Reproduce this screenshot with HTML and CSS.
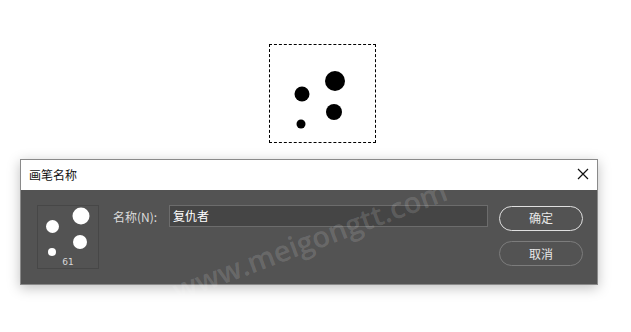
FILE: index.html
```html
<!DOCTYPE html>
<html lang="zh">
<head>
<meta charset="utf-8">
<link rel="stylesheet" href="styles.css">
</head>
<body>
<div class="page">
  <div class="stage">
    <div class="brush-preview">
      <svg width="105" height="97" viewBox="0 0 105 97">
        <circle cx="65" cy="36" r="10" fill="#000"/>
        <circle cx="32" cy="49" r="7.5" fill="#000"/>
        <circle cx="64" cy="67" r="8" fill="#000"/>
        <circle cx="31" cy="79" r="4.5" fill="#000"/>
      </svg>
    </div>
  </div>
  <div class="dialog">
    <div class="titlebar">
      <span class="title">画笔名称</span>
      <svg class="close" width="12" height="12" viewBox="0 0 12 12">
        <path d="M1 1 L11 11 M11 1 L1 11" stroke="#111" stroke-width="1.2" fill="none"/>
      </svg>
    </div>
    <div class="body">
      <div class="thumb">
        <svg width="62" height="64" viewBox="0 0 62 64">
          <circle cx="44" cy="11" r="8.5" fill="#fff"/>
          <circle cx="15.5" cy="21.5" r="6.5" fill="#fff"/>
          <circle cx="43" cy="37" r="7" fill="#fff"/>
          <circle cx="15" cy="47" r="4" fill="#fff"/>
        </svg>
        <span class="thumb-num">61</span>
      </div>
      <div class="field">
        <span class="label">名称(N):</span>
        <div class="input">复仇者</div>
      </div>
      <div class="buttons">
        <div class="btn primary">确定</div>
        <div class="btn">取消</div>
      </div>
    </div>
  </div>
  <div class="watermark">www.meigongtt.com</div>
</div>
</body>
</html>
```

FILE: styles.css
```css
html, body {
  margin: 0;
  padding: 0;
  background: #fff;
}
.page {
  position: relative;
  width: 631px;
  height: 332px;
  overflow: hidden;
  font-family: "Noto Sans CJK SC", "Noto Sans", sans-serif;
}
.stage {
  padding-top: 44px;
  padding-left: 269px;
}
.brush-preview {
  width: 105px;
  height: 97px;
  border: 1px dashed #000;
}
.brush-preview svg {
  display: block;
}
.dialog {
  margin-top: 16px;
  margin-left: 20px;
  width: 578px;
  box-sizing: border-box;
  border: 1px solid #8a8a8a;
  box-shadow: 0 3px 12px rgba(0, 0, 0, 0.25);
}
.titlebar {
  height: 30px;
  background: #fff;
  display: flex;
  align-items: center;
  justify-content: space-between;
  padding: 0 8px 0 8px;
}
.title {
  font-size: 12px;
  color: #111;
  line-height: 1;
}
.close {
  display: block;
  margin-top: -2px;
}
.body {
  height: 94px;
  background: #535353;
  display: flex;
  align-items: flex-start;
  padding: 15px 14px 0 16px;
  box-sizing: border-box;
}
.thumb {
  position: relative;
  width: 62px;
  height: 64px;
  border: 1px solid #474747;
  box-sizing: border-box;
  flex: none;
}
.thumb svg {
  display: block;
  position: absolute;
  left: -1px;
  top: -1px;
}
.thumb-num {
  position: absolute;
  left: 0;
  right: 0;
  bottom: 1px;
  text-align: center;
  font-family: "DejaVu Sans", sans-serif;
  font-size: 9px;
  color: #d8d8d8;
  line-height: 1;
}
.field {
  flex: 1;
  display: flex;
  align-items: center;
  margin-left: 14px;
  margin-right: 11px;
}
.label {
  font-size: 12px;
  color: #dcdcdc;
  width: 56px;
  flex: none;
  white-space: nowrap;
}
.input {
  flex: 1;
  height: 22px;
  box-sizing: border-box;
  background: #454545;
  border: 1px solid #6c6c6c;
  color: #fff;
  font-size: 12px;
  line-height: 20px;
  padding-left: 3px;
}
.buttons {
  display: flex;
  flex-direction: column;
  gap: 10px;
  margin-top: 1px;
}
.btn {
  width: 84px;
  height: 25px;
  box-sizing: border-box;
  border: 1px solid #7c7c7c;
  border-radius: 13px;
  color: #e8e8e8;
  font-size: 12px;
  line-height: 23px;
  text-align: center;
}
.btn.primary {
  border: 1.5px solid #e0e0e0;
  line-height: 22px;
}
.watermark {
  position: absolute;
  left: 179px;
  top: 275px;
  font-family: "Open Sans", sans-serif;
  font-weight: 600;
  font-size: 29px;
  line-height: 30px;
  color: rgba(255, 255, 255, 0.15);
  transform: rotate(-20.5deg);
  transform-origin: left bottom;
  white-space: nowrap;
  pointer-events: none;
}
```
